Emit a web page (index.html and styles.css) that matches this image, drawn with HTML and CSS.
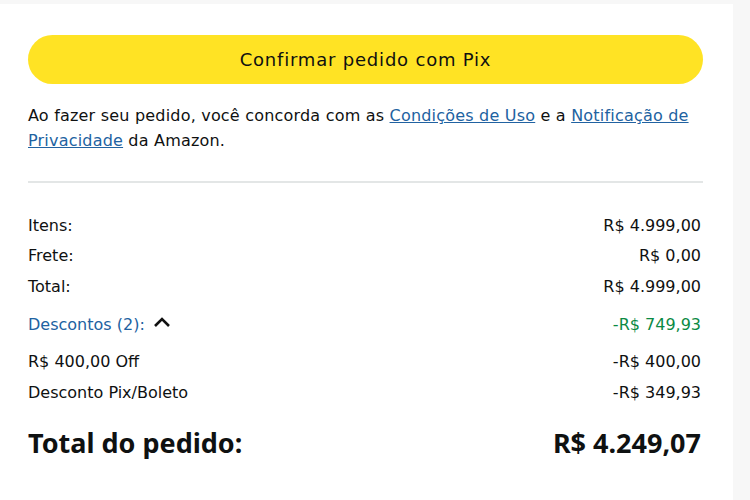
FILE: index.html
```html
<!DOCTYPE html>
<html lang="pt-BR">
<head>
    <meta charset="UTF-8">
    <meta name="viewport" content="width=device-width, initial-scale=1.0">
    <title>Resumo do pedido</title>
    <link rel="stylesheet" href="styles.css">
</head>
<body>
    <div class="summary">
        <button class="pay-button">Confirmar pedido com Pix</button>

        <p class="terms">
            Ao fazer seu pedido, você concorda com as <a href="#">Condições de Uso</a> e a <a href="#privacidade">Notificação de</a><br><a href="#privacidade">Privacidade</a> da Amazon.
        </p>

        <hr class="divider">

        <div class="rows">
            <div class="row"><span>Itens:</span><span>R$ 4.999,00</span></div>
            <div class="row"><span>Frete:</span><span>R$ 0,00</span></div>
            <div class="row"><span>Total:</span><span>R$ 4.999,00</span></div>
            <div class="row discounts">
                <span class="toggle">Descontos (2):
                    <svg class="chevron" width="18" height="12" viewBox="0 0 18 12">
                        <path d="M2 10 L9 3 L16 10" fill="none" stroke="#111" stroke-width="2.6"/>
                    </svg>
                </span>
                <span class="green">-R$ 749,93</span>
            </div>
            <div class="row"><span>R$ 400,00 Off</span><span>-R$ 400,00</span></div>
            <div class="row"><span>Desconto Pix/Boleto</span><span>-R$ 349,93</span></div>
        </div>

        <div class="grand-total">
            <span>Total do pedido:</span>
            <span>R$ 4.249,07</span>
        </div>
    </div>
</body>
</html>
```

FILE: styles.css
```css
body {
    margin: 0;
    padding-top: 4px;
    height: 496px;
    background-color: #f7f7f7;
    font-family: "DejaVu Sans", "Noto Sans", sans-serif;
    color: #0f1111;
}

.summary {
    width: 733px;
    height: 100%;
    box-sizing: border-box;
    padding: 31px 30px 0 28px;
    background-color: #fff;
}

.pay-button {
    display: block;
    width: 100%;
    height: 49px;
    border: none;
    border-radius: 25px;
    background-color: #ffe324;
    color: #0f1111;
    font-family: inherit;
    font-size: 18px;
    letter-spacing: 0.8px;
    cursor: pointer;
}

.terms {
    margin: 19px 0 0;
    font-size: 16px;
    line-height: 25px;
    letter-spacing: 0.2px;
}

.terms a {
    color: #2162a1;
    text-decoration: underline;
}

.divider {
    margin: 28px 0 0;
    border: none;
    border-top: 2px solid #e3e6e6;
}

.rows {
    margin-top: 27px;
}

.row {
    display: flex;
    justify-content: space-between;
    align-items: center;
    height: 30.5px;
    padding-right: 2px;
    font-size: 16px;
}

.row.discounts {
    height: 45px;
}

.toggle {
    display: flex;
    align-items: center;
    gap: 8px;
    color: #2162a1;
}

.chevron {
    margin-top: -4px;
}

.green {
    color: #0b8a44;
}

.grand-total {
    display: flex;
    justify-content: space-between;
    margin-top: 16px;
    padding-right: 2px;
    font-family: "Noto Sans", sans-serif;
    font-size: 27px;
    font-weight: bold;
}
```
